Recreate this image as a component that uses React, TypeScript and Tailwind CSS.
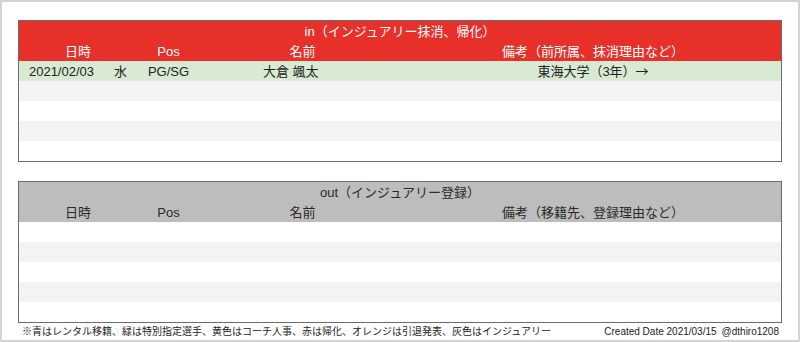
import React from "react";

type Row = { date?: string; day?: string; pos?: string; name?: string; note?: React.ReactNode };

const FONT = "font-['Liberation_Sans','Noto_Sans_CJK_JP',sans-serif]";
const COLS = "grid grid-cols-[85px_33px_63px_205px_1fr]";

const IN_ROWS: Row[] = [
    {
        date: "2021/02/03",
        day: "水",
        pos: "PG/SG",
        name: "大倉 颯太",
        note: (
            <>
                東海大学（3年）<span className="font-['Noto_Sans_CJK_JP',sans-serif]">→</span>
            </>
        ),
    },
    {},
    {},
    {},
    {},
];
const OUT_ROWS: Row[] = [{}, {}, {}, {}, {}];

function TransferTable({
    title,
    noteLabel,
    rows,
    headClass,
    rowClasses,
}: {
    title: string;
    noteLabel: string;
    rows: Row[];
    headClass: string;
    rowClasses: string[];
}) {
    return (
        <div className="border border-[#6b6b6b]">
            <div className={headClass}>
                <div className="h-5 flex items-center justify-center text-[13px] leading-none">{title}</div>
                <div className={`${COLS} h-5 items-center text-[13px] leading-none`}>
                    <div className="col-span-2 text-center">日時</div>
                    <div className="text-center">Pos</div>
                    <div className="text-center">名前</div>
                    <div className="text-center">備考{noteLabel}</div>
                </div>
            </div>
            {rows.map((row, i) => (
                <div key={i} className={`${COLS} h-5 items-center text-[13px] leading-none text-[#222] ${rowClasses[i]}`}>
                    <div className="text-center">{row.date}</div>
                    <div className="text-center">{row.day}</div>
                    <div className="text-center">{row.pos}</div>
                    <div className="pl-[63px]">{row.name}</div>
                    <div className="text-center">{row.note}</div>
                </div>
            ))}
        </div>
    );
}

export default function App() {
    return (
        <div className={`w-[800px] h-[342px] bg-white border-2 border-[#d3d3d3] px-4 pt-[18px] flex flex-col ${FONT}`}>
            <TransferTable
                title="in（インジュアリー抹消、帰化）"
                noteLabel="（前所属、抹消理由など）"
                rows={IN_ROWS}
                headClass="bg-[#e8302a] text-white"
                rowClasses={["bg-[#d9ead3]", "bg-[#f3f3f3]", "bg-white", "bg-[#f3f3f3]", "bg-white"]}
            />
            <div className="h-[19px]" />
            <TransferTable
                title="out（インジュアリー登録）"
                noteLabel="（移籍先、登録理由など）"
                rows={OUT_ROWS}
                headClass="bg-[#bdbdbd] text-[#2a2a2a]"
                rowClasses={["bg-white", "bg-[#f3f3f3]", "bg-white", "bg-[#f3f3f3]", "bg-white"]}
            />
            <div className="flex-1 flex items-center justify-between pl-1 pr-[3px] text-[10px] leading-none text-[#222]">
                <span>※青はレンタル移籍、緑は特別指定選手、黄色はコーチ人事、赤は帰化、オレンジは引退発表、灰色はインジュアリー</span>
                <span className="flex gap-[5px]">
                    <span>Created Date 2021/03/15</span>
                    <span>@dthiro1208</span>
                </span>
            </div>
        </div>
    );
}
